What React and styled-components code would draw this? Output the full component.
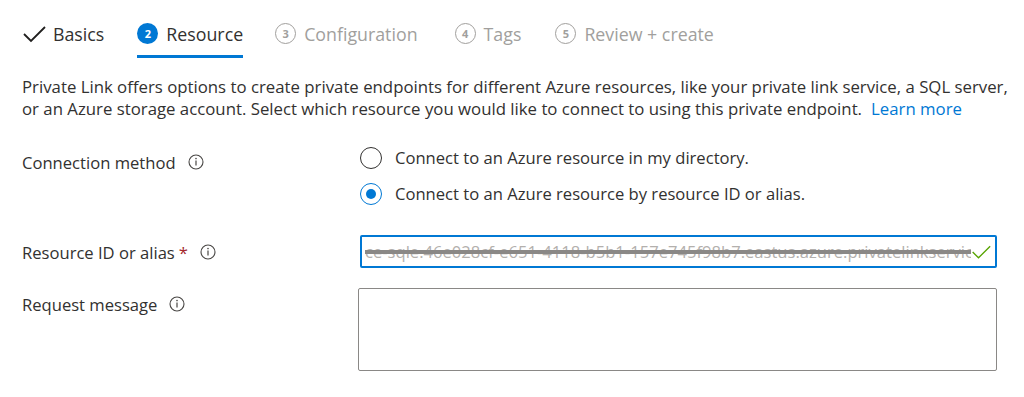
import styled, { createGlobalStyle } from "styled-components"

const Global = createGlobalStyle`
    html, body {
        margin: 0;
        background: #fff;
    }
    body {
        font-family: "Open Sans", "Noto Sans", sans-serif;
        color: #323130;
    }
`

const steps = [
    { label: "Basics", state: "done", gap: 0 },
    { label: "Resource", state: "active", n: 2, gap: 33 },
    { label: "Configuration", state: "todo", n: 3, gap: 32 },
    { label: "Tags", state: "todo", n: 4, gap: 37 },
    { label: "Review + create", state: "todo", n: 5, gap: 34 },
]

const InfoIcon = () => (
    <svg width="16" height="16" viewBox="0 0 16 16">
        <circle cx="8" cy="8" r="7" fill="none" stroke="#484644" strokeWidth="1.1" />
        <line x1="8" y1="6.6" x2="8" y2="11.6" stroke="#484644" strokeWidth="1.2" />
        <circle cx="8" cy="4.6" r="0.8" fill="#484644" />
    </svg>
)

const Check = ({ size = 24, color = "#201f1e", width = 1.8 }) => (
    <svg width={size} height={size} viewBox="0 0 24 24">
        <polyline points="2,12 9,19 23,5" fill="none" stroke={color} strokeWidth={width} />
    </svg>
)

const App = () => {
    return (
        <Page>
            <Global />
            <Tabs>
                {steps.map((s) => (
                    <Tab key={s.label} $gap={s.gap} $active={s.state === "active"} $todo={s.state === "todo"}>
                        {s.state === "done" ? <Check /> : <StepNum $active={s.state === "active"}>{s.n}</StepNum>}
                        <span>{s.label}</span>
                    </Tab>
                ))}
            </Tabs>

            <Intro>
                Private Link offers options to create private endpoints for different Azure resources, like your private link service, a SQL server,
                <br />
                or an Azure storage account. Select which resource you would like to connect to using this private endpoint.
                <LearnMore href="#">Learn more</LearnMore>
            </Intro>

            <Form>
                <Label $top="5px">
                    Connection method <InfoIcon />
                </Label>
                <Radios>
                    <RadioRow>
                        <Radio />
                        Connect to an Azure resource in my directory.
                    </RadioRow>
                    <RadioRow>
                        <Radio $checked />
                        Connect to an Azure resource by resource ID or alias.
                    </RadioRow>
                </Radios>

                <Label $top="6px">
                    Resource ID or alias <Required>*</Required> <InfoIcon />
                </Label>
                <Input>
                    <Obscured>ce-sqle.46e028cf-e651-4118-b5b1-157e745f98b7.eastus.azure.privatelinkservice</Obscured>
                    <Check size={20} color="#57a300" width={1.6} />
                </Input>

                <Label $top="5px">
                    Request message <InfoIcon />
                </Label>
                <TextArea />
            </Form>
        </Page>
    )
}

const Page = styled.div`
    padding: 0 27px 0 22px;
    width: 1024px;
    box-sizing: border-box;
`

const Tabs = styled.div`
    display: flex;
    height: 58px;
`

const Tab = styled.div`
    display: flex;
    align-items: center;
    gap: 7px;
    height: 58px;
    margin-left: ${(p) => p.$gap}px;
    padding-top: 12px;
    box-sizing: border-box;
    font-size: 17.8px;
    color: ${(p) => (p.$todo ? "#a19f9d" : "#323130")};
    border-bottom: 3px solid ${(p) => (p.$active ? "#0078d4" : "transparent")};
`

const StepNum = styled.span`
    width: 21px;
    height: 21px;
    margin-right: 1px;
    border-radius: 50%;
    box-sizing: border-box;
    display: flex;
    align-items: center;
    justify-content: center;
    font-size: 11px;
    font-weight: 700;
    background: ${(p) => (p.$active ? "#0078d4" : "transparent")};
    color: ${(p) => (p.$active ? "#fff" : "#a19f9d")};
    border: ${(p) => (p.$active ? "none" : "1.5px solid #a19f9d")};
`

const Intro = styled.p`
    margin: 18px 0 0;
    font-size: 16.8px;
    line-height: 21.5px;
    white-space: nowrap;
    color: #323130;
`

const LearnMore = styled.a`
    color: #0078d4;
    text-decoration: none;
    margin-left: 9px;
`

const Form = styled.div`
    display: grid;
    grid-template-columns: 338px 1fr;
    margin-top: 27px;
    font-size: 16.6px;
`

const Label = styled.div`
    display: flex;
    align-items: center;
    gap: 12px;
    align-self: start;
    padding-top: ${(p) => p.$top};
    height: 22px;
`

const Required = styled.span`
    color: #a4262c;
    margin-left: -8px;
`

const Radios = styled.div`
    display: flex;
    flex-direction: column;
    gap: 13px;
    margin-bottom: 30px;
`

const RadioRow = styled.label`
    display: flex;
    align-items: center;
    gap: 13px;
    height: 23px;
`

const Radio = styled.span`
    width: 22px;
    height: 22px;
    border-radius: 50%;
    box-sizing: border-box;
    border: 1px solid ${(p) => (p.$checked ? "#0078d4" : "#323130")};
    display: flex;
    align-items: center;
    justify-content: center;
    &::after {
        content: "";
        width: 10px;
        height: 10px;
        border-radius: 50%;
        background: ${(p) => (p.$checked ? "#0078d4" : "transparent")};
    }
`

const Input = styled.div`
    height: 33px;
    margin-bottom: 20px;
    border: 2px solid #0078d4;
    border-radius: 2px;
    box-sizing: border-box;
    display: flex;
    align-items: center;
    padding: 0 4px 0 3px;
    overflow: hidden;
    svg { flex: none; }
`

const Obscured = styled.span`
    flex: 1;
    min-width: 0;
    white-space: nowrap;
    overflow: hidden;
    text-overflow: clip;
    color: #b3b0ad;
    font-size: 16.6px;
    text-decoration: line-through;
    text-decoration-color: #8a8886;
    text-decoration-thickness: 4px;
`

const TextArea = styled.div`
    height: 83px;
    margin-left: -2px;
    border: 1px solid #8a8886;
    border-radius: 2px;
    box-sizing: border-box;
`

export default App
